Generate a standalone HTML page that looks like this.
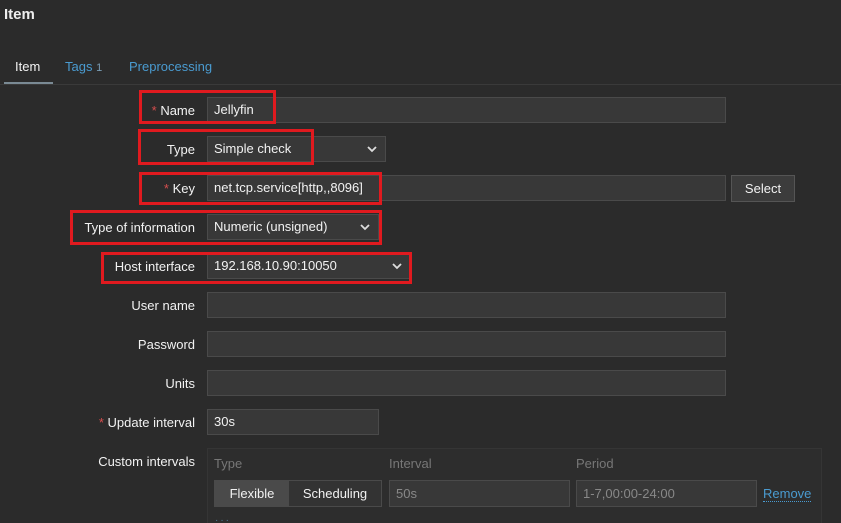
<html style="width:841px;height:523px;overflow:hidden"><head><style>
body{margin:0;width:841px;height:523px;background:#2b2b2b;font-family:"Liberation Sans",sans-serif;font-size:13px;color:#f2f2f2;position:relative;overflow:hidden}
.a{position:absolute}
.lbl{position:absolute;right:646px;text-align:right;white-space:nowrap}
.in{position:absolute;left:207px;height:26px;background:#383838;border:1px solid #4a4a4a;box-sizing:border-box;line-height:24px;padding-left:6px}
.r{position:absolute;border:3px solid #e01a1f;box-sizing:border-box}
.st{color:#d64e4e}
.ch{position:absolute;right:8px;top:9px}
</style></head><body>
<div class="a" style="left:4px;top:6px;font-size:15px;font-weight:bold;color:#eee">Item</div>
<div class="a" style="left:15px;top:59px">Item</div>
<div class="a" style="left:4px;top:82px;width:49px;height:3px;background:#7a8a94"></div>
<div class="a" style="left:0;top:84px;width:841px;height:1px;background:#3a3a3a"></div>
<div class="a" style="left:65px;top:59px;color:#4a9bd0">Tags <span style="font-size:11px;color:#7a9db5">1</span></div>
<div class="a" style="left:129px;top:59px;color:#4a9bd0">Preprocessing</div>

<div class="lbl" style="top:103px"><span class="st">* </span>Name</div>
<div class="in" style="top:97px;width:519px">Jellyfin</div>
<div class="lbl" style="top:142px">Type</div>
<div class="in" style="top:136px;width:179px">Simple check<svg class="ch" width="10" height="7" viewBox="0 0 10 7"><path d="M1 1l4 4 4-4" stroke="#ddd" stroke-width="1.8" fill="none"/></svg></div>
<div class="lbl" style="top:181px"><span class="st">* </span>Key</div>
<div class="in" style="top:175px;width:519px">net.tcp.service[http,,8096]</div>
<div class="a" style="left:731px;top:175px;width:64px;height:27px;background:#3c3c3c;border:1px solid #555;box-sizing:border-box;text-align:center;line-height:25px">Select</div>
<div class="lbl" style="top:220px">Type of information</div>
<div class="in" style="top:214px;width:172px">Numeric (unsigned)<svg class="ch" width="10" height="7" viewBox="0 0 10 7"><path d="M1 1l4 4 4-4" stroke="#ddd" stroke-width="1.8" fill="none"/></svg></div>
<div class="lbl" style="top:259px">Host interface</div>
<div class="in" style="top:253px;width:204px">192.168.10.90:10050<svg class="ch" width="10" height="7" viewBox="0 0 10 7"><path d="M1 1l4 4 4-4" stroke="#ddd" stroke-width="1.8" fill="none"/></svg></div>
<div class="lbl" style="top:298px">User name</div>
<div class="in" style="top:292px;width:519px"></div>
<div class="lbl" style="top:337px">Password</div>
<div class="in" style="top:331px;width:519px"></div>
<div class="lbl" style="top:376px">Units</div>
<div class="in" style="top:370px;width:519px"></div>
<div class="lbl" style="top:415px"><span class="st">* </span>Update interval</div>
<div class="in" style="top:409px;width:172px">30s</div>
<div class="lbl" style="top:454px">Custom intervals</div>
<div class="a" style="left:207px;top:448px;width:613px;height:80px;border:1px solid #353535;background:#2d2d2d"></div>
<div class="a" style="left:214px;top:456px;color:#777">Type</div>
<div class="a" style="left:389px;top:456px;color:#777">Interval</div>
<div class="a" style="left:576px;top:456px;color:#777">Period</div>
<div class="a" style="left:214px;top:480px;width:168px;height:27px;border:1px solid #4a4a4a;box-sizing:border-box;background:#333;display:flex">
<div style="width:74px;background:#4a4a4a;text-align:center;line-height:25px">Flexible</div><div style="flex:1;text-align:center;line-height:25px">Scheduling</div></div>
<div class="in" style="left:389px;top:480px;width:181px;height:27px;line-height:25px;color:#888">50s</div>
<div class="in" style="left:576px;top:480px;width:181px;height:27px;line-height:25px;color:#888">1-7,00:00-24:00</div>
<div class="a" style="left:763px;top:486px;color:#4a9bd0;border-bottom:1px dotted #4a9bd0">Remove</div>
<div class="a" style="left:215px;top:515px;color:#4a7a99;font-size:10px;letter-spacing:2px">···</div>

<div class="r" style="left:139px;top:90px;width:137px;height:34px"></div>
<div class="r" style="left:138px;top:129px;width:176px;height:36px"></div>
<div class="r" style="left:139px;top:172px;width:243px;height:33px"></div>
<div class="r" style="left:70px;top:210px;width:312px;height:35px"></div>
<div class="r" style="left:101px;top:252px;width:311px;height:32px"></div>
</body></html>
